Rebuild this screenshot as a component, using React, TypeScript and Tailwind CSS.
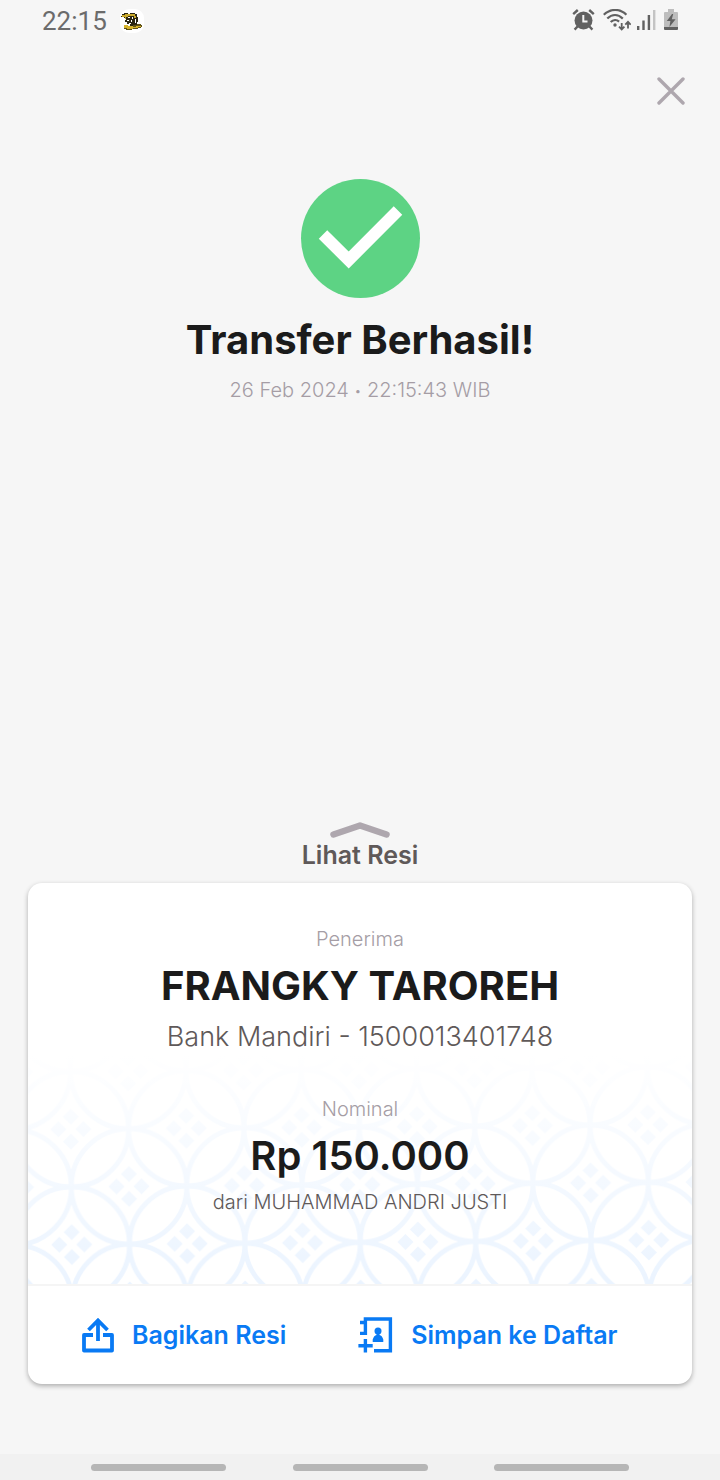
import type { ReactNode } from "react";

function MascotIcon() {
  return (
    <svg viewBox="0 0 24 24" className="size-6" aria-hidden="true">
      <rect width="24" height="24" rx="9" fill="#fff" />
      <path d="M1 7h1V5h2V4h4v1h2V4h5v1h2v3h1v5h-1v3h-2v1h-5v-2H7v-2H5v-2h1V9H4V8H1z" fill="#2a2612" />
      <path d="M2 6h3V5h3v3H6v2H5V8H2zM8 5h7v2H8zM14 7h2v2h-2z" fill="#c9a92c" />
      <path d="M8 8h2v1H8zM12 8h1v2h-1zM7 11h2v1H7zM15 10h1v4h-1zM11 11h1v2h-1zM9 14h2v1H9z" fill="#fff" />
      <path d="M4 16h4v1h5v-1h4v-1h4v1h1v2h-1v1h-3v1h-6v1H6v-1H4z" fill="#5f5218" />
      <path d="M4 16h4v1h5v1h3v-1h5v1h-3v1h-5v1H7v-1H4z" fill="#d6b42c" />
    </svg>
  );
}

function AlarmIcon() {
  return (
    <svg viewBox="0 0 23 22" className="h-[22px] w-[23px]" aria-hidden="true">
      <circle cx="11.5" cy="11.5" r="9" fill="#616161" />
      <path d="M1.2 5.2 5.8 1M17.2 1l4.6 4.2M6 17l-3.4 3.6M17 17l3.4 3.6" stroke="#616161" strokeWidth="2.4" fill="none" />
      <path d="M11.3 6v6.6h4.2" stroke="#f6f6f6" strokeWidth="2" fill="none" />
    </svg>
  );
}

function WifiIcon() {
  return (
    <svg viewBox="0 0 28 22" className="h-[22px] w-7" fill="none" stroke="#616161" aria-hidden="true">
      <path d="M.8 5.8C7.5-.7 17-.7 23.4 5.8M4.3 9.6C9 4.8 15 4.8 19.8 9.6M7.7 13c2.6-2.6 6-2.6 8.4-.4" strokeWidth="2.2" />
      <circle cx="12" cy="16" r="1.7" fill="#616161" stroke="none" />
      <path d="M18.7 14v6.5M16 17.6l2.7 2.9 2.7-2.9M25 19.5v-6.7M22.3 15.7l2.7-2.9 2.7 2.9" strokeWidth="1.8" />
    </svg>
  );
}

function SignalIcon() {
  return (
    <svg viewBox="0 0 19 22" className="h-[22px] w-[19px]" aria-hidden="true">
      <path d="M0 17h2.4v4H0zM5.3 11.5h2.4V21H5.3zM10.7 6h2.4v15h-2.4z" fill="#616161" />
      <path d="M16 1h2.4v20H16z" fill="#c4c4c4" />
    </svg>
  );
}

function BatteryIcon() {
  return (
    <svg viewBox="0 0 14 22" className="h-[22px] w-3.5" aria-hidden="true">
      <path d="M4 0h6v3h3q1 0 1 1v15H0V4q0-1 1-1h3z" fill="#bdbdbd" />
      <path d="M0 18h14v2q0 1-1 1H1q-1 0-1-1z" fill="#616161" />
      <path d="M8 5 2.8 12h3.6L5.4 18l6.2-7.8H7.8L9.2 5z" fill="#616161" />
    </svg>
  );
}

function ShareIcon() {
  return (
    <svg viewBox="0 0 32 36" className="h-9 w-8" fill="none" stroke="currentColor" strokeWidth="3.8" aria-hidden="true">
      <path d="M11 18H2v15.5h28V18h-9" strokeLinejoin="round" />
      <path d="M16 3v21M6.5 13 16 3.5l9.5 9.5" />
    </svg>
  );
}

function ContactIcon() {
  return (
    <svg viewBox="0 0 35 36" className="h-9 w-[35px]" fill="none" stroke="currentColor" strokeWidth="3.4" aria-hidden="true">
      <path d="M2 5.5h5.4M2 16.4h5.4V2h25v31.7H16" />
      <path d="M.4 28.7h14.3M7.4 22v13.4" />
      <circle cx="20" cy="14" r="3.5" fill="currentColor" stroke="none" />
      <path d="M14.7 25v-2.6Q16 18.5 18.5 18v-3h3v3q2.5.5 3.8 4.4V25z" fill="currentColor" stroke="none" />
    </svg>
  );
}

function KawungPattern() {
  return (
    <svg className="absolute inset-x-0 bottom-0 h-[230px] w-full" aria-hidden="true">
      <defs>
        <g id="kawung-petals">
          <path d="M0-20.5l8 8-8 8-8-8zM0 4.5l8 8-8 8-8-8zM-12.5-8l8 8-8 8-8-8zM12.5-8l8 8-8 8-8-8z" fill="#ebf4ff" />
          <circle r="57.7" fill="none" stroke="#ebf4ff" strokeWidth="4.8" />
        </g>
        <pattern
          id="kawung"
          width="115.4"
          height="115.4"
          patternUnits="userSpaceOnUse"
          patternTransform="translate(43.8 190.6) rotate(-0.45)"
        >
          <use href="#kawung-petals" />
          <use href="#kawung-petals" x="115.4" />
          <use href="#kawung-petals" y="115.4" />
          <use href="#kawung-petals" x="115.4" y="115.4" />
          <use href="#kawung-petals" x="57.7" y="57.7" />
        </pattern>
        <linearGradient id="fade" x1="0" y1="0" x2="0" y2="1">
          <stop offset="0" stopColor="#fff" />
          <stop offset="1" stopColor="#fff" stopOpacity="0" />
        </linearGradient>
      </defs>
      <rect width="100%" height="100%" fill="url(#kawung)" />
      <rect width="100%" height="100%" fill="url(#fade)" />
    </svg>
  );
}

function ActionButton({ icon, children }: { icon: ReactNode; children: ReactNode }) {
  return (
    <button type="button" className="flex items-center gap-[18px] text-[25px] font-semibold whitespace-nowrap text-[#097af4]">
      {icon}
      <span className="pt-0.5">{children}</span>
    </button>
  );
}

export default function App() {
  return (
    <div className="flex min-h-screen flex-col bg-[#f6f6f6] font-['Inter',sans-serif] text-[#1b1b1b]">
      <header className="flex h-10 items-center justify-between px-[42px]">
        <div className="flex items-center gap-[13px] pt-0.5">
          <span className="font-['Roboto',sans-serif] text-[26px] leading-10 text-[#6b6b6b]">22:15</span>
          <MascotIcon />
        </div>
        <div className="flex items-center gap-2">
          <AlarmIcon />
          <div className="flex gap-1.5">
            <WifiIcon />
            <SignalIcon />
          </div>
          <BatteryIcon />
        </div>
      </header>

      <div className="flex justify-end px-[35px] pt-[37px]">
        <button type="button" aria-label="Tutup">
          <svg viewBox="0 0 28 28" className="size-7" fill="none" stroke="#aea7ae" strokeWidth="3.4" strokeLinecap="round">
            <path d="M2 2l24 24M26 2 2 26" />
          </svg>
        </button>
      </div>

      <main className="flex flex-1 flex-col px-7 pt-[74px]">
        <section className="flex flex-col items-center">
          <svg viewBox="0 0 119 119" className="size-[119px]" aria-hidden="true">
            <circle cx="59.5" cy="59.5" r="59.5" fill="#5dd384" />
            <path d="M22 55.5 47.7 81 97 31.5" fill="none" stroke="#fff" strokeWidth="12" />
          </svg>
          <h1 className="mt-[18px] text-[40px] leading-12 font-bold">Transfer Berhasil!</h1>
          <p className="mt-3 text-xl leading-7 font-light text-[#a59da5]">
            26 Feb 2024 <span className="align-[2px] text-xs">•</span> 22:15:43 WIB
          </p>
        </section>

        <button type="button" className="mt-auto flex flex-col items-center gap-px self-center text-[#5f5959]">
          <svg viewBox="0 0 60 16" className="h-4 w-[60px]" fill="none" stroke="#aea7ae" strokeWidth="6.5" strokeLinecap="round" strokeLinejoin="round">
            <path d="M3.5 12.5 30 3.5l26.5 9" />
          </svg>
          <span className="text-[25px] leading-8 font-semibold">Lihat Resi</span>
        </button>

        <article className="mt-3 overflow-hidden rounded-[14px] bg-white shadow-[0_2px_5px_rgba(0,0,0,0.3)]">
          <div className="relative pt-[42px] pb-[68px] text-center">
            <KawungPattern />
            <div className="relative">
              <p className="text-xl leading-7 font-light text-[#a59da5]">Penerima</p>
              <h2 className="mt-[9px] text-[40px] leading-12 font-bold">FRANGKY TAROREH</h2>
              <p className="mt-[7px] text-[27px] leading-10 font-light text-[#5f5959]">Bank Mandiri - 1500013401748</p>
              <p className="mt-[38px] text-xl leading-7 font-light text-[#a59da5]">Nominal</p>
              <p className="mt-[9px] text-[40px] leading-12 font-semibold">Rp 150.000</p>
              <p className="mt-2 text-xl leading-7 font-light text-[#5f5959]">dari MUHAMMAD ANDRI JUSTI</p>
            </div>
          </div>
          <div className="flex h-[100px] items-center gap-[72px] border-t-2 border-[#f5f5f5] px-[54px]">
            <ActionButton icon={<ShareIcon />}>Bagikan Resi</ActionButton>
            <ActionButton icon={<ContactIcon />}>Simpan ke Daftar</ActionButton>
          </div>
        </article>
      </main>

      <nav className="mt-[70px] flex h-[26px] items-center justify-between bg-[#f1f1f1] px-[91px]">
        <button type="button" aria-label="Aplikasi terbaru" className="h-[7px] w-[135px] rounded-full bg-[#b6b6b6]" />
        <button type="button" aria-label="Beranda" className="h-[7px] w-[135px] rounded-full bg-[#b6b6b6]" />
        <button type="button" aria-label="Kembali" className="h-[7px] w-[135px] rounded-full bg-[#b6b6b6]" />
      </nav>
    </div>
  );
}
